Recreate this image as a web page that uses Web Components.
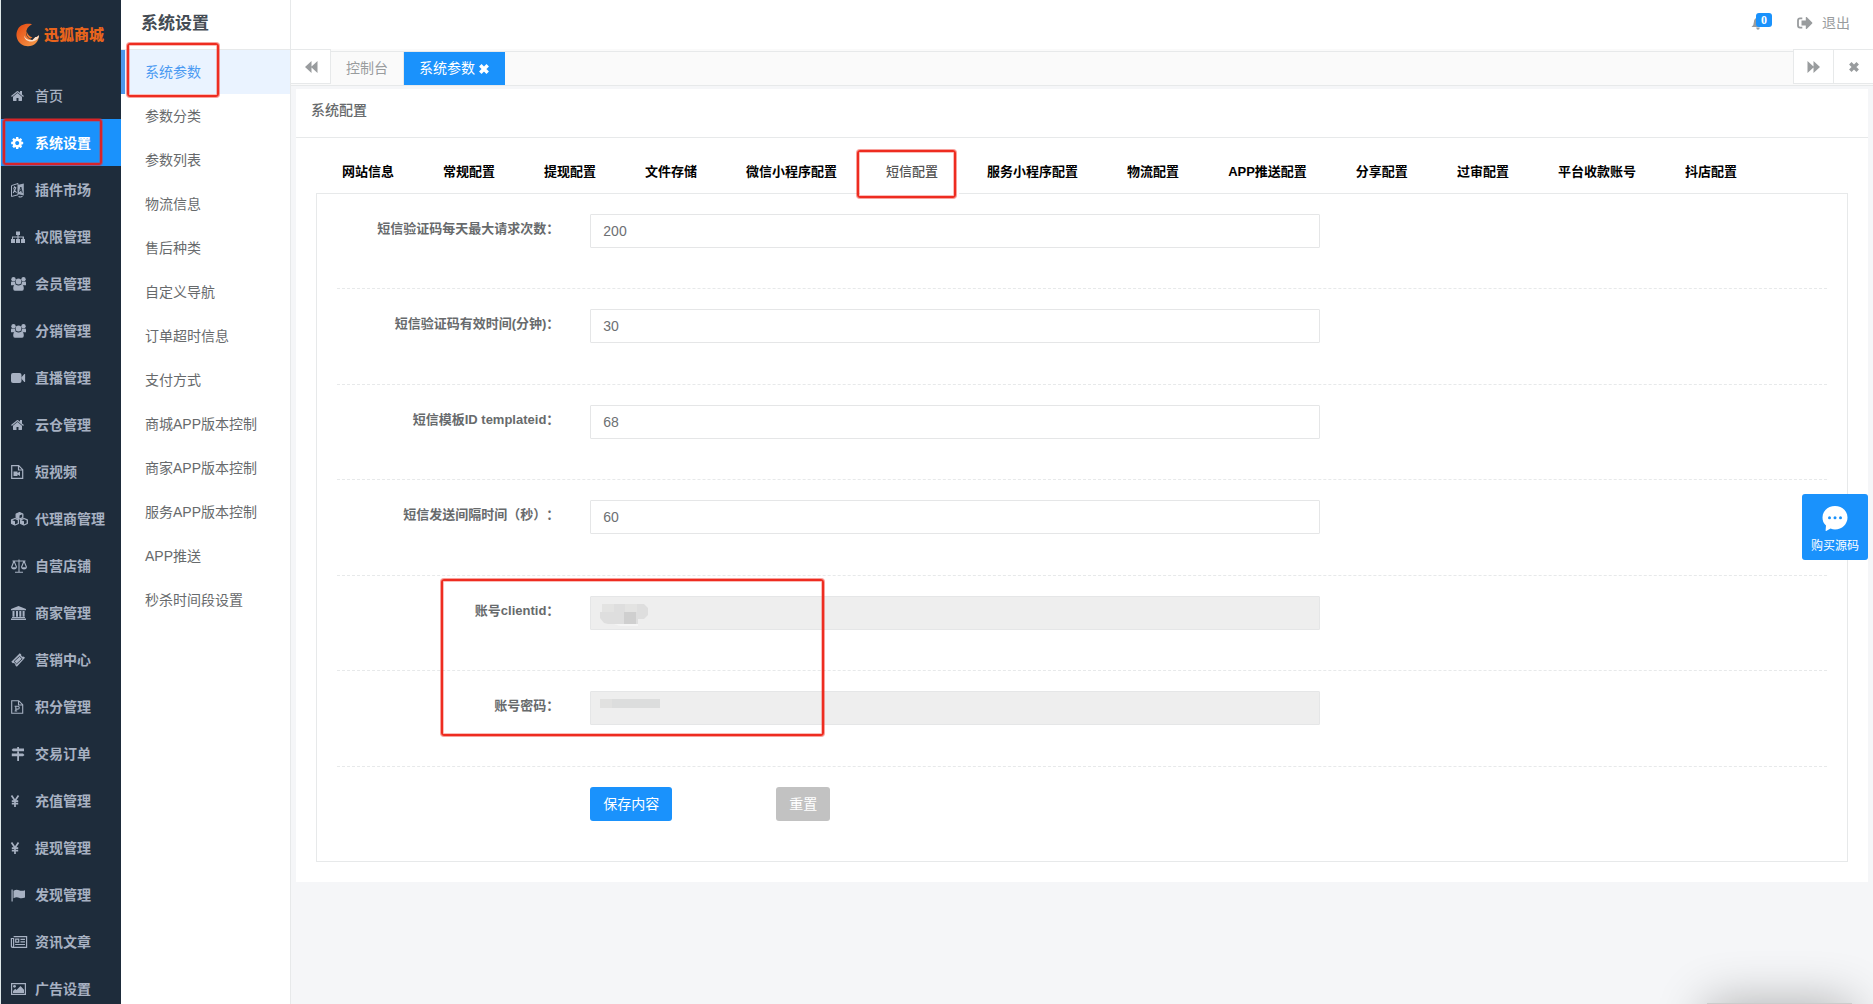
<!DOCTYPE html>
<html lang="zh-CN">
<head>
<meta charset="utf-8">
<title>系统设置</title>
<style>
  html, body { margin: 0; height: 100%; }
  body {
    --blue: #1a92fc; --line: #e7e9ea; --muted: #999c9e; --dark: #1e2c3b;
    font: 14px/20px "Liberation Sans", "Noto Sans CJK SC", sans-serif;
    text-spacing-trim: space-all;
    color: #676a6c; background: #f5f6f8; overflow: hidden;
  }
</style>
</head>
<body>
<admin-app></admin-app>
<script>
const ICONS = {
  home: '<path transform="translate(.5 1) scale(.0078125)" d="M1472 992v480q0 26-19 45t-45 19h-384v-384h-256v384h-384q-26 0-45-19t-19-45v-480q0-1 .5-3t.5-3l575-474 575 474q1 2 1 6zm223-69l-62 74q-8 9-21 11h-3q-13 0-21-7l-692-577-692 577q-12 8-24 7-13-2-21-11l-62-74q-8-10-7-23.5t11-21.5l719-599q32-26 76-26t76 26l244 204v-195q0-14 9-23t23-9h192q14 0 23 9t9 23v408l219 182q10 8 11 21.5t-7 23.5z"/>',
  cog: '<path transform="translate(.2 1) scale(.0078125)" d="M1152 896q0-106-75-181t-181-75-181 75-75 181 75 181 181 75 181-75 75-181zm512-109v222q0 12-8 23t-20 13l-185 28q-19 54-39 91 35 50 107 138 10 12 10 25t-9 23q-27 37-99 108t-94 71q-12 0-26-9l-138-108q-44 23-91 38-16 136-29 186-7 28-36 28h-222q-14 0-24.5-8.5t-11.5-21.5l-28-184q-49-16-90-37l-141 107q-10 9-25 9-14 0-25-11-126-114-165-168-7-10-7-23 0-12 8-23 15-21 51-66.5t54-70.5q-27-50-41-99l-183-27q-13-2-21-12.5t-8-23.5v-222q0-12 8-23t19-13l186-28q14-46 39-92-40-57-107-138-10-12-10-24 0-10 9-23 26-36 98.500-107.500t94.500-71.500q13 0 26 10l138 107q44-23 91-38 16-136 29-186 7-28 36-28h222q14 0 24.500 8.500t11.500 21.500l28 184q49 16 90 37l142-107q9-9 24-9 13 0 25 10 129 119 165 170 7 8 7 22 0 12-8 23-15 21-51 66.500t-54 70.500q26 50 41 98l183 28q13 2 21 12.500t8 23.500z"/>',
  language: '<path d="M7.500 3L13.800 1.600v11.800L7.500 12z" opacity=".95"/><path d="M1.500 3.600L8 1.500v11.300l-6.500 1.700z" fill="#1e2c3b" stroke="currentColor"/><path d="M3 6.200l3.200-.9M4.500 4.200v1.700M5.800 6l-2.600 5M3.600 7.600l3 3M8.500 14.500c1.500.8 3 .6 4-.3" fill="none" stroke="currentColor" stroke-width="1.100"/><path d="M9.500 10l1.300-5L12.300 10.800M10 8.400l1.700.4" fill="none" stroke="#1e2c3b" stroke-width=".9"/>',
  sitemap: '<path d="M6 2.500h4v3.500H8.600v1.500H14v2.500h1v4h-4v-4h1.500V8.600H8.600V10H10v4H6v-4h1.400V8.600H3V10h2v4H1v-4h1V7.500h5.400V6H6z"/>',
  users: '<circle cx="3.500" cy="3.300" r="2.200"/><circle cx="13.500" cy="3.300" r="2.200"/><circle cx="8.500" cy="5.500" r="2.900"/><path d="M1 9.300V6.800Q1 5.300 2 5.400q1.500.8 2.900.2 0 1.800.9 2.700-1 .1-1.600 1zM16 9.300V6.800q0-1.500-1-1.400-1.500.8-2.900.2 0 1.800-.9 2.700 1 .1 1.600 1zM5.700 8.600q2.800 1.700 5.600 0 2.500.3 2.500 3.900 0 2.300-1.700 2.300H4.900q-1.700 0-1.700-2.300 0-3.600 2.500-3.900z"/>',
  video: '<path d="M3 3h6.500q2 0 2 2v6q0 2-2 2H3q-2 0-2-2V5q0-2 2-2z"/><path d="M11.500 7.200l2.800-3.200q.8-.4.8.500v7q0 .9-.8.500l-2.800-3.200z"/>',
  filevideo: '<path d="M1.700 1.700h7l4 4v8.600h-11zM8.500 1.700V6h4.200" fill="none" stroke="currentColor" stroke-width="1.200"/><path d="M3.500 7.500h4v1.400l2.500-1.500v4.600L7.500 10.500V12h-4z"/>',
  cubes: '<g fill="none" stroke="currentColor" stroke-width="1.300" stroke-linejoin="round"><path d="M9.500 1.700l3.300 1.300v3.500L9.500 8 6.200 6.500V3zM5 7.500l3.400 1.400v3.600L5 14l-3.400-1.500V8.900zM14 7.500l3.300 1.400v3.600L14 14l-3.400-1.500V8.900z"/></g><path d="M6.200 3l3.300 1.400L9.500 8 6.200 6.500zM1.600 8.900L5 10.300V14l-3.400-1.500zM10.600 8.900l3.400 1.400V14l-3.400-1.500zM6.200 3l3.300-1.300L12.800 3 9.500 4.400z"/>',
  scale: '<path d="M2.500 3h13M9 1.500v12.700M5 14.300h8M4 3L1.500 9.500M4 3l2.700 6.500M14 3l-2.600 6.500M14 3l2.600 6.500" fill="none" stroke="currentColor" stroke-width="1.100"/><path d="M1 9.300h6Q6.500 11.500 4 11.500T1 9.300zM11 9.300h6q-.4 2.200-3 2.200t-3-2.200z"/>',
  bank: '<path d="M8.500 1L16 4v1.200H1V4zM2.500 6h2v5.700h-2zM6 6h2v5.700H6zM9.300 6h2v5.700h-2zM12.600 6h2v5.700h-2zM2 12h13v1H2zM1 13.500h15V15H1z"/>',
  ticket: '<path d="M9.800 1.200l1.400 1.400q-.3 1.500.9 1.900.8.300 1.500-.1l1.400 1.400L6.800 14.800 5.300 13.300q.3-1.300-.7-1.900-.9-.5-1.700-.1L1.300 9.700z"/><path d="M9.600 4.400l2.600 2.500-5.500 5-2.600-2.500z" fill="none" stroke="#1e2c3b" stroke-width=".8"/>',
  filep: '<path d="M1.700 1.700h7l4 4v8.600h-11zM8.500 1.700V6h4.200M5.800 12V7.300h1.500q2 0 2 1.400t-2 1.400H5.800M4.600 12h2.600M4.600 7.300h1.200" fill="none" stroke="currentColor" stroke-width="1.100"/>',
  signs: '<path d="M7.200 1h1.800v1.500H14v2.800H3L1.600 3.900 3 2.500h4.200zM7.200 5.500H9v2h4L14.500 9 13 10.300H9V15H7.200v-4.700H1.800V7.500h5.400z"/>',
  yen: '<path d="M1.500 2.500L5 7.800l3.500-5.300M5 7.500V14M1.800 8.200h6.400M1.800 10.600h6.400" fill="none" stroke="currentColor" stroke-width="1.700"/>',
  flag: '<path d="M1.500 2.500h1.200v12H1.500zM3.500 3.700q3-1.700 5.500-.5t6 0v7.400q-3.500 1.400-6 .2t-5.500.5z"/>',
  news: '<path d="M3.600 2.700h13v10.600H2.500q-1.100 0-1.100-1.200V4.500h2.200v7.600q0 1-1 1.200" fill="none" stroke="currentColor" stroke-width="1.200"/><path d="M5.700 5.200h3v3h-3zM10.500 5.300h4.500M10.500 7.800h4.500M5.200 10.500h9.800" fill="none" stroke="currentColor" stroke-width="1.200"/>',
  image: '<path d="M1.600 2.600h13.800v10.800H1.600z" fill="none" stroke="currentColor" stroke-width="1.200"/><circle cx="4.500" cy="5.300" r="1.400"/><path d="M3 12v-2l2.200-2.200 1.300 1.300 4-4L14 8.700V12z"/>',
  backward: '<path d="M9.500 2v12L3 8zM15.500 2v12L9 8z"/>',
  forward: '<path d="M2.500 2v12L9 8zM8.500 2v12L15 8z"/>',
  close: '<path d="M5.300 4.300l7.400 7.400M12.700 4.300l-7.400 7.400" fill="none" stroke="currentColor" stroke-width="3.500"/>',
  bell: '<path d="M7 1.700q.9 0 .9 1 3.200.9 3.200 4.400 0 3.500 2.400 4.900H.5Q2.900 10.600 2.900 7.100q0-3.500 3.200-4.400 0-1 .9-1zM5.200 12.600h3.600q-.2 2.200-1.800 2.200t-1.800-2.200z"/>',
  logout: '<path d="M6.300 3.400H4Q2 3.400 2 5.400v5.200q0 2 2 2h2.300" fill="none" stroke="currentColor" stroke-width="1.800"/><path d="M5.500 5.500h4.300V2.300q.3-.6.900-.2L16.200 7.500q.4.500 0 1l-5.500 5.400q-.6.400-.9-.2v-3.200H5.500z"/>'
};

function define(name, html, setup) {
  const tpl = document.createElement('template');
  tpl.innerHTML = html;
  customElements.define(name, class extends HTMLElement {
    connectedCallback() {
      if (this.shadowRoot) return;
      this.attachShadow({ mode: 'open' }).append(tpl.content.cloneNode(true));
      if (setup) setup.call(this, this.shadowRoot);
    }
  });
}

define('ui-icon', `<style>
  :host { display: inline-flex; width: 18px; height: 16px; flex: none; }
  svg { width: 18px; height: 16px; fill: currentColor; }
</style><svg viewBox="0 0 18 16" aria-hidden="true"></svg>`, function (root) {
  root.querySelector('svg').innerHTML = ICONS[this.getAttribute('name')];
});

define('nav-item', `<style>
  a { display: flex; align-items: center; gap: 7px; height: 47px; padding-left: 9px; color: #a7b1c2; text-decoration: none; font-weight: 600; white-space: nowrap; }
  :host { display: block; }
  :host([plain]) a { font-weight: 500; }
  :host([active]) a { background: var(--blue); color: #fff; }
</style><a href="#"><ui-icon></ui-icon><slot></slot></a>`, function (root) {
  const icon = document.createElement('ui-icon');
  icon.setAttribute('name', this.getAttribute('icon'));
  root.querySelector('ui-icon').replaceWith(icon);
});

define('side-nav', `<style>
  :host { display: block; background: var(--dark); overflow: hidden; }
  .logo { display: flex; align-items: center; gap: 4px; height: 72px; padding: 0 0 2px 14px; box-sizing: border-box; color: #e9641c; font-size: 15px; font-weight: 900; white-space: nowrap; }
  .logo svg { width: 25px; height: 25px; flex: none; }
</style>
<div class="logo"><svg viewBox="0 0 25 25" aria-hidden="true">
  <defs><linearGradient id="g" x1="0" y1="0" x2="1" y2="1"><stop offset="0" stop-color="#e4460f"/><stop offset="1" stop-color="#f6a04e"/></linearGradient></defs>
  <path fill="url(#g)" d="M17 1.200C12 .2 6 1 3 6c-3 5-1.500 11.500 3 15 4.500 3.200 11 2.900 15-1 2-2.300 3-5 3-8-1 1.500-2 1.900-3.500 2.100L17.500 17C14.500 16.500 11.500 14 11 10.500 11 6.500 13 3 17 1.200z"/>
  <path fill="#f9e0cc" d="M17.500 17l3-2.900c1.500-.2 2.500-.6 3.500-2.100-.2 4-3 6-7 6.500-4.500.4-7.500-2-8-6 1.500 3.500 4.500 4.900 8.500 4.500z"/>
  <path fill="#f07a30" d="M11.500 8c-.5 3 .5 6 3.500 7.800l2.500-1.300C14 13.500 12.500 11 11.500 8z"/>
</svg><span>迅狐商城</span></div>
<nav>
  <nav-item icon="home" plain>首页</nav-item><nav-item icon="cog" active>系统设置</nav-item>
  <nav-item icon="language">插件市场</nav-item><nav-item icon="sitemap">权限管理</nav-item>
  <nav-item icon="users">会员管理</nav-item><nav-item icon="users">分销管理</nav-item>
  <nav-item icon="video">直播管理</nav-item><nav-item icon="home">云仓管理</nav-item>
  <nav-item icon="filevideo">短视频</nav-item><nav-item icon="cubes">代理商管理</nav-item>
  <nav-item icon="scale">自营店铺</nav-item><nav-item icon="bank">商家管理</nav-item>
  <nav-item icon="ticket">营销中心</nav-item><nav-item icon="filep">积分管理</nav-item>
  <nav-item icon="signs">交易订单</nav-item><nav-item icon="yen">充值管理</nav-item>
  <nav-item icon="yen">提现管理</nav-item><nav-item icon="flag">发现管理</nav-item>
  <nav-item icon="news">资讯文章</nav-item><nav-item icon="image">广告设置</nav-item>
</nav>`);

define('sub-nav', `<style>
  :host { display: block; background: #fff; border-right: 1px solid var(--line); }
  h2 { margin: 0; height: 50px; box-sizing: border-box; padding: 14px 0 0 20px; font-size: 17px; line-height: 20px; font-weight: 600; color: #454c54; border-bottom: 1px solid var(--line); }
  a { display: block; padding-left: 24px; line-height: 44px; color: #676a6c; text-decoration: none; white-space: nowrap; }
  a.on { background: #eaf3ff; color: #4b9af2; border-left: 4px solid #4b97ea; padding-left: 20px; }
</style>
<h2>系统设置</h2>
<nav><a class="on" href="#">系统参数</a><a href="#">参数分类</a><a href="#">参数列表</a><a href="#">物流信息</a><a href="#">售后种类</a><a href="#">自定义导航</a><a href="#">订单超时信息</a><a href="#">支付方式</a><a href="#">商城APP版本控制</a><a href="#">商家APP版本控制</a><a href="#">服务APP版本控制</a><a href="#">APP推送</a><a href="#">秒杀时间段设置</a></nav>`);

define('top-bar', `<style>
  :host { display: flex; justify-content: flex-end; align-items: center; gap: 22px; height: 49px; padding: 0 23px 4px 0; box-sizing: border-box; background: #fff; }
  a { display: flex; align-items: center; gap: 8px; color: var(--muted); text-decoration: none; }
  .bell { position: relative; padding-right: 5px; }
  .badge { position: absolute; left: 5px; top: -2px; width: 16px; height: 14px; border-radius: 3px; background: var(--blue); color: #fff; font: 700 12px/14px "Liberation Serif", serif; text-align: center; }
</style>
<a class="bell" href="#" aria-label="消息"><ui-icon name="bell"></ui-icon><span class="badge">0</span></a>
<a href="#"><ui-icon name="logout"></ui-icon>退出</a>`);

define('page-tabs', `<style>
  :host { display: flex; height: 37px; box-sizing: border-box; background: #fafafa; border-bottom: 1px solid var(--line); }
  button { width: 40px; height: 35px; box-sizing: border-box; border: 1px solid var(--line); border-width: 1px 1px 1px 0; background: #fff; color: var(--muted); padding: 0; display: flex; align-items: center; justify-content: center; flex: none; }
  button.r { border-width: 1px 0 1px 1px; }
  nav { flex: 1; display: flex; margin-top: 2px; border-top: 1px solid var(--line); }
  a { display: flex; align-items: center; padding: 0 15px; color: var(--muted); text-decoration: none; border-right: 1px solid var(--line); line-height: 33px; white-space: nowrap; }
  a.on { background: var(--blue); color: #fff; border: 0; padding-right: 12px; }
</style>
<button aria-label="向左"><ui-icon name="backward"></ui-icon></button>
<nav><a href="#">控制台</a><a class="on" href="#">系统参数<ui-icon name="close"></ui-icon></a></nav>
<button class="r" aria-label="向右"><ui-icon name="forward"></ui-icon></button>
<button class="r" aria-label="关闭"><ui-icon name="close"></ui-icon></button>`);

define('form-row', `<style>
  :host { display: grid; grid-template-columns: 2fr 6fr 4fr; margin: 0 -15px 20px; }
  label { text-align: right; padding: 6px 16px 0 0; font-size: 13px; line-height: 18px; font-weight: 600; white-space: nowrap; }
  .field { position: relative; padding: 0 15px; }
  input { display: block; width: 100%; height: 34px; box-sizing: border-box; border: 1px solid #e5e6e7; border-radius: 1px; padding: 6px 12px; background: #fff; color: #6d7073; font: inherit; }
  input:disabled { background: #eee; }
  .line { grid-column: 1 / -1; margin: 40px 15px 0; border-top: 1px dashed var(--line); }
  :host(:nth-of-type(even)) .line { margin-top: 41px; }
  ::slotted(svg) { position: absolute; left: 25px; top: 8px; }
</style>
<label for="f"></label><div class="field"><input id="f" type="text"><slot></slot></div><div class="line"></div>`, function (root) {
  root.querySelector('label').textContent = this.getAttribute('label');
  const input = root.querySelector('input');
  input.value = this.getAttribute('value') || '';
  input.disabled = this.hasAttribute('disabled');
});

define('config-panel', `<style>
  :host { display: block; margin: 3px 5px 0; background: #fff; }
  h5 { margin: 0; padding: 11px 15px 17px; font-size: 14px; line-height: 20px; font-weight: 500; border-bottom: 1px solid var(--line); }
  .body { padding: 15px 20px 20px; }
  .tabs { display: flex; border-bottom: 1px solid var(--line); }
  .tabs a { padding: 9px 21px 11px 26px; margin-right: 2px; font-size: 13px; line-height: 20px; font-weight: 600; color: #000; text-decoration: none; white-space: nowrap; }
  .tabs a.on { color: #555; font-weight: 500; margin-bottom: -1px; background: #fff; }
  form { border: 1px solid var(--line); border-top: 0; padding: 20px 20px 40px; }
  .actions { display: grid; grid-template-columns: 2fr 10fr; margin: 0 -15px; }
  .actions div { grid-column: 2; padding: 0 15px; display: flex; gap: 104px; }
  button { height: 34px; padding: 0 13px; border: 0; border-radius: 3px; background: var(--blue); color: #fff; font: inherit; }
  button[type=reset] { background: #c2c2c2; }
</style>
<h5>系统配置</h5>
<div class="body">
  <nav class="tabs"><a href="#">网站信息</a><a href="#">常规配置</a><a href="#">提现配置</a><a href="#">文件存储</a><a href="#">微信小程序配置</a><a class="on" href="#">短信配置</a><a href="#">服务小程序配置</a><a href="#">物流配置</a><a href="#">APP推送配置</a><a href="#">分享配置</a><a href="#">过审配置</a><a href="#">平台收款账号</a><a href="#">抖店配置</a></nav>
  <form>
    <form-row label="短信验证码每天最大请求次数：" value="200"></form-row>
    <form-row label="短信验证码有效时间(分钟)：" value="30"></form-row>
    <form-row label="短信模板ID templateid：" value="68"></form-row>
    <form-row label="短信发送间隔时间（秒）：" value="60"></form-row>
    <form-row label="账号clientid：" disabled><svg width="50" height="24" aria-hidden="true"><path fill="#dedede" d="M2 0h42l4 4v7l-4 4h-6v5H8l-4-1-4-5V8h2z"/><path fill="#e3e3e2" d="M2 0h12v8H2zM25 0h12v8H25z"/><path fill="#cfcfcf" d="M24 8h12v12H24z"/><path fill="#f5f5f5" d="M14 20h24v2H20z"/></svg></form-row>
    <form-row label="账号密码：" disabled><svg width="60" height="24" aria-hidden="true"><path fill="#dcdddd" d="M0 0h60v9H0z"/><path fill="#e1e1e0" d="M0 0h12v9H0z"/></svg></form-row>
    <div class="actions"><div><button type="button">保存内容</button><button type="reset">重置</button></div></div>
  </form>
</div>`);

define('chat-button', `<style>
  :host { position: absolute; right: 5px; top: 494px; }
  button { width: 66px; height: 66px; border: 0; border-radius: 3px; padding: 7px 0 0; background: var(--blue); color: #fff; font: inherit; font-size: 12px; line-height: 18px; display: flex; flex-direction: column; align-items: center; gap: 5px; }
  svg { width: 28px; height: 28px; margin-top: 3px; }
</style>
<button><svg viewBox="0 0 28 28" aria-hidden="true"><path fill="#fff" d="M14 2c7 0 12.500 5 12.500 11.500S21 25.500 14 25.500c-1.500 0-3-.2-4.500-.9L5.200 27c-.6.200-.7-.3-.6-.8L5 21.500C2.500 19.500 1.500 16.500 1.500 13.500 1.500 7 7 2 14 2z"/><g fill="#1a92fc"><circle cx="8.500" cy="13.800" r="1.500"/><circle cx="14" cy="13.800" r="1.500"/><circle cx="19.500" cy="13.800" r="1.500"/></g></svg>购买源码</button>`);

define('mark-box', `<style>
  :host { position: absolute; box-sizing: border-box; border: 2px solid #ee2c20; border-radius: 3px; box-shadow: 0 0 0 1px #ee2c2070, inset 0 0 0 1px #ee2c2050; pointer-events: none; }
</style>`);

define('admin-app', `<style>
  :host { position: relative; display: grid; grid-template-columns: 120px 170px 1fr; height: 100vh; padding-left: 1px; box-sizing: border-box; overflow: hidden; background: #dfe9ea; }
  main { background: #f5f6f8; min-width: 0; }
  side-nav, sub-nav { min-height: 0; }
  .m1 { left: 3px; top: 119px; width: 99px; height: 46px; border-color: #d8232a; }
  .m2 { left: 127px; top: 43px; width: 92px; height: 54px; }
  .m3 { left: 857px; top: 150px; width: 99px; height: 48px; }
  .m4 { left: 441px; top: 579px; width: 383px; height: 157px; }
  .toast { position: absolute; right: 21px; top: calc(100% - 1px); width: 145px; height: 60px; background: #ccc; box-shadow: 0 0 50px rgba(0,0,0,.3); }
</style>
<side-nav></side-nav><sub-nav></sub-nav>
<main><top-bar></top-bar><page-tabs></page-tabs><config-panel></config-panel></main>
<div class="toast"></div>
<chat-button></chat-button>
<mark-box class="m1"></mark-box><mark-box class="m2"></mark-box><mark-box class="m3"></mark-box><mark-box class="m4"></mark-box>`);
</script>
</body>
</html>
